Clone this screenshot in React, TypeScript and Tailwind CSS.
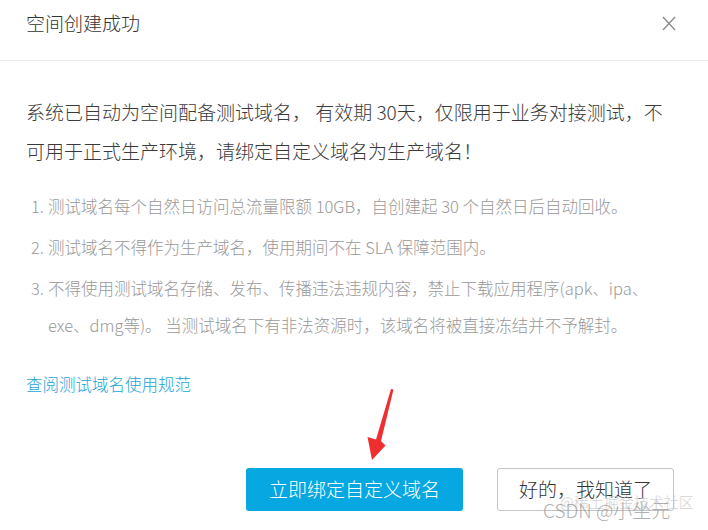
import React from 'react';

const rules = [
  { no: '1.', lines: ['测试域名每个自然日访问总流量限额 10GB，自创建起 30 个自然日后自动回收。'] },
  { no: '2.', lines: ['测试域名不得作为生产域名，使用期间不在 SLA 保障范围内。'] },
  {
    no: '3.',
    lines: [
      '不得使用测试域名存储、发布、传播违法违规内容，禁止下载应用程序(apk、ipa、',
      'exe、dmg等)。 当测试域名下有非法资源时，该域名将被直接冻结并不予解封。',
    ],
  },
];

const CloseIcon = () => (
  <svg width="14" height="15" viewBox="0 0 14 15" className="mt-[8px]" fill="none">
    <path d="M1 1l12 13M13 1L1 14" stroke="#8a8a8a" strokeWidth="1.3" />
  </svg>
);

// red annotation arrow drawn over the dialog
const Arrow = () => (
  <svg
    className="absolute left-0 top-0 pointer-events-none"
    width="708"
    height="530"
    viewBox="0 0 708 530"
  >
    <polygon
      points="391,389 393.5,389.5 381,441 385.5,445.5 372,460 367.5,437 376,439.5"
      fill="#ef2f2f"
    />
  </svg>
);

export default function App() {
  return (
    <div className="relative w-[708px] h-[530px] overflow-hidden bg-white font-light font-['Noto_Sans_CJK_SC','Noto_Sans',sans-serif]">
      {/* header */}
      <div className="flex items-start justify-between h-[61px] border-b border-[#e8e8e8] pl-[26px] pr-[32px] pt-[8px]">
        <h2 className="text-[19px] leading-[29px] text-[#333]">空间创建成功</h2>
        <CloseIcon />
      </div>

      {/* body */}
      <div className="pl-[26px] pr-[16px] pt-[31px]">
        <p className="text-[19px] leading-[39px] text-[#3a3a3a] whitespace-nowrap">
          系统已自动为空间配备测试域名， 有效期 30天，仅限用于业务对接测试，不
          <br />
          可用于正式生产环境，请绑定自定义域名为生产域名！
        </p>

        <ol className="mt-[18px] pl-[5px] flex flex-col gap-[4px] text-[16.5px] leading-[37px] text-[#999]">
          {rules.map((r) => (
            <li key={r.no} className="flex">
              <span className="w-[17px] shrink-0">{r.no}</span>
              <span className="whitespace-nowrap">
                {r.lines.map((l, i) => (
                  <span key={i} className="block">
                    {l}
                  </span>
                ))}
              </span>
            </li>
          ))}
        </ol>

        <a className="mt-[28px] block text-[16.5px] leading-[24px] text-[#1ba4d9]">查阅测试域名使用规范</a>
      </div>

      {/* footer buttons */}
      <div className="mt-[72px] flex justify-end gap-[34px] pr-[34px]">
        <button className="w-[217px] h-[43px] rounded-[3px] bg-[#07a7e1] text-[19px] text-white">
          立即绑定自定义域名
        </button>
        <button className="w-[177px] h-[43px] rounded-[3px] border border-[#c4c4c4] bg-white text-[19px] text-[#333]">
          好的，我知道了
        </button>
      </div>

      {/* watermark */}
      <div className="absolute left-[560px] top-[492px] text-[15px] leading-[20px] text-[#c9c9c9] opacity-80 whitespace-nowrap">
        @稀土掘金技术社区
      </div>
      <div className="absolute left-[543px] top-[498px] text-[19px] leading-[24px] text-[#8f8f8f] opacity-70 whitespace-nowrap">
        CSDN @小坐元
      </div>

      <Arrow />
    </div>
  );
}
